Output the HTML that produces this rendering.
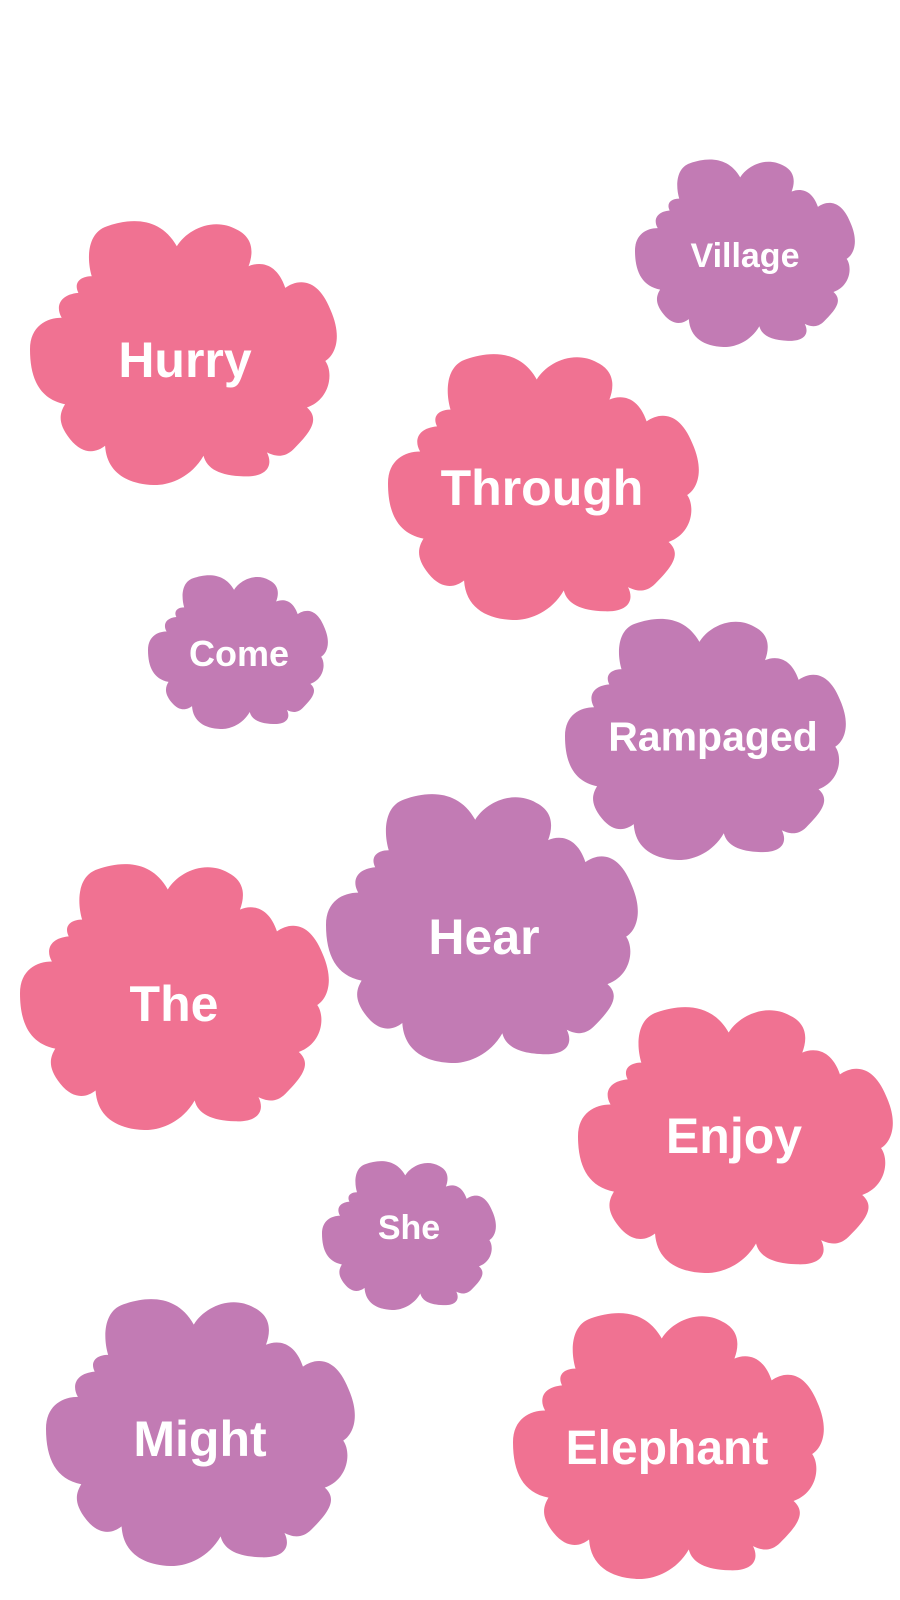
<!DOCTYPE html>
<html><head><meta charset="utf-8"><style>
html,body{margin:0;padding:0;background:#fff;width:900px;height:1600px;overflow:hidden;position:relative}
.c{position:absolute}
.c svg{position:absolute;left:0;top:0;width:100%;height:100%}
.t{position:absolute;transform:translate(-50%,-50%);font-family:"Liberation Sans",sans-serif;font-weight:bold;color:#fff;line-height:1;white-space:nowrap}
</style></head><body>
<svg width="0" height="0" style="position:absolute"><defs>
<path id="cl" d="M215,230 C200,180 200,100 260,80 C330,55 420,50 470,140 C500,90 580,50 650,90 C700,115 700,160 685,200 C720,185 770,190 795,265 C830,240 890,230 930,330 C970,420 940,470 915,485 C940,520 930,600 860,625 C900,660 870,700 820,750 C790,780 760,770 740,760 C760,800 740,835 670,832 C600,830 560,810 550,770 C510,840 440,860 400,858 C320,855 260,820 255,740 C230,760 190,770 150,720 C110,670 120,640 135,615 C60,600 30,540 30,450 C30,380 80,355 125,355 C105,320 120,285 175,280 C160,250 180,230 215,230 Z"/>
</defs></svg>

<div class="c" style="left:635px;top:158px;width:220px;height:189px"><svg viewBox="30 58 920 800" preserveAspectRatio="none"><use href="#cl" fill="#c27bb4"/></svg></div>
<div class="t" style="left:745px;top:256px;font-size:34px">Village</div>

<div class="c" style="left:30px;top:219px;width:307px;height:266px"><svg viewBox="30 58 920 800" preserveAspectRatio="none"><use href="#cl" fill="#f07292"/></svg></div>
<div class="t" style="left:185px;top:360px;font-size:50px">Hurry</div>

<div class="c" style="left:388px;top:352px;width:311px;height:268px"><svg viewBox="30 58 920 800" preserveAspectRatio="none"><use href="#cl" fill="#f07292"/></svg></div>
<div class="t" style="left:542px;top:488px;font-size:50px">Through</div>

<div class="c" style="left:148px;top:574px;width:180px;height:155px"><svg viewBox="30 58 920 800" preserveAspectRatio="none"><use href="#cl" fill="#c27bb4"/></svg></div>
<div class="t" style="left:239px;top:654px;font-size:36px">Come</div>

<div class="c" style="left:565px;top:617px;width:281px;height:243px"><svg viewBox="30 58 920 800" preserveAspectRatio="none"><use href="#cl" fill="#c27bb4"/></svg></div>
<div class="t" style="left:713px;top:737px;font-size:41px">Rampaged</div>

<div class="c" style="left:326px;top:792px;width:312px;height:271px"><svg viewBox="30 58 920 800" preserveAspectRatio="none"><use href="#cl" fill="#c27bb4"/></svg></div>
<div class="t" style="left:484px;top:937px;font-size:50px">Hear</div>

<div class="c" style="left:20px;top:862px;width:309px;height:268px"><svg viewBox="30 58 920 800" preserveAspectRatio="none"><use href="#cl" fill="#f07292"/></svg></div>
<div class="t" style="left:174px;top:1004px;font-size:50px">The</div>

<div class="c" style="left:578px;top:1005px;width:315px;height:268px"><svg viewBox="30 58 920 800" preserveAspectRatio="none"><use href="#cl" fill="#f07292"/></svg></div>
<div class="t" style="left:734px;top:1136px;font-size:50px">Enjoy</div>

<div class="c" style="left:322px;top:1160px;width:174px;height:150px"><svg viewBox="30 58 920 800" preserveAspectRatio="none"><use href="#cl" fill="#c27bb4"/></svg></div>
<div class="t" style="left:409px;top:1228px;font-size:34px">She</div>

<div class="c" style="left:46px;top:1297px;width:309px;height:269px"><svg viewBox="30 58 920 800" preserveAspectRatio="none"><use href="#cl" fill="#c27bb4"/></svg></div>
<div class="t" style="left:200px;top:1439px;font-size:50px">Might</div>

<div class="c" style="left:513px;top:1311px;width:311px;height:268px"><svg viewBox="30 58 920 800" preserveAspectRatio="none"><use href="#cl" fill="#f07292"/></svg></div>
<div class="t" style="left:667px;top:1449px;font-size:48px">Elephant</div>
</body></html>
